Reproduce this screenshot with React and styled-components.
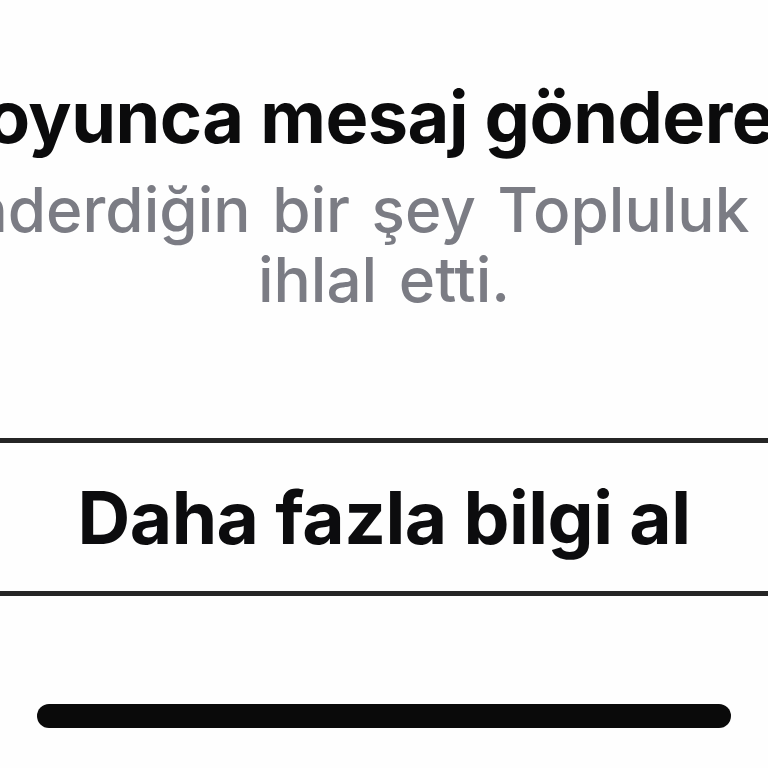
import React from "react";
import styled, { createGlobalStyle } from "styled-components";

const Global = createGlobalStyle`
  html, body { margin: 0; padding: 0; background: #fefefe; }
  body { font-family: Inter, "Noto Sans", "Liberation Sans", sans-serif; }
  #root { width: 768px; height: 768px; overflow: hidden; }
`;

const Screen = styled.div`
  width: 768px;
  height: 768px;
  overflow: hidden;
  background: #fefefe;
  display: flex;
  flex-direction: column;
  align-items: center;
`;

const Text = styled.div`
  width: 1800px;
  flex-shrink: 0;
  display: flex;
  flex-direction: column;
  align-items: center;
  text-align: center;
  padding-top: 74px;
`;

const Title = styled.h1`
  margin: 0;
  font-size: 72px;
  line-height: 86px;
  font-weight: 700;
  color: #0b0b0c;
  white-space: nowrap;
  letter-spacing: -0.5px;
`;

const Subtitle = styled.p`
  margin: 15px 0 0;
  font-size: 62px;
  line-height: 70px;
  font-weight: 500;
  color: #7b7c84;
  white-space: nowrap;
  word-spacing: 5px;
`;

const Divider = styled.div`
  align-self: stretch;
  height: 5px;
  background: #252525;
  margin-top: ${(p) => p.$top || 0}px;
  flex-shrink: 0;
`;

const Button = styled.button`
  align-self: stretch;
  height: 148px;
  flex-shrink: 0;
  border: 0;
  background: transparent;
  display: flex;
  align-items: center;
  justify-content: center;
  font-family: Inter, "Noto Sans", sans-serif;
  font-size: 73px;
  font-weight: 700;
  color: #0c0c0e;
  letter-spacing: -0.5px;
  padding: 0;
`;

const HomeIndicator = styled.div`
  width: 694px;
  height: 24px;
  border-radius: 12px;
  background: #0a0a0a;
  margin-top: 108px;
  flex-shrink: 0;
`;

export default function App() {
  return (
    <>
      <Global />
      <Screen>
        <Text>
          <Title>1 gün boyunca mesaj gönderemezsin</Title>
          <Subtitle>
            Geçenlerde gönderdiğin bir şey Topluluk Standartlarımızı
            <br />
            ihlal etti.
          </Subtitle>
        </Text>
        <Divider $top={123} />
        <Button>Daha fazla bilgi al</Button>
        <Divider />
        <HomeIndicator />
      </Screen>
    </>
  );
}
